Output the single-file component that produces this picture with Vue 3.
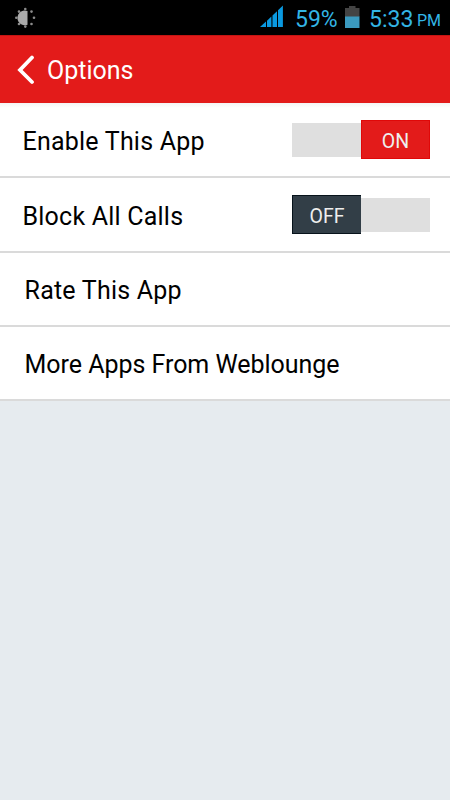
<script setup>
import { ref } from 'vue'

const options = ref([
  { label: 'Enable This App', toggle: true, enabled: true },
  { label: 'Block All Calls', toggle: true, enabled: false },
  { label: 'Rate This App' },
  { label: 'More Apps From Weblounge' }
])

function handleClick(option) {
  if (!option.toggle) return
  option.enabled = !option.enabled
}
</script>

<template>
  <div class="screen">
    <div class="status-bar">
      <svg class="brightness" width="22" height="22" viewBox="0 0 22 22">
        <path d="M13.5 4A7.4 7.4 0 1 0 13.5 17.8Z" fill="#aaa" />
        <g fill="#8c8c8c">
          <circle cx="11.3" cy="2" r="1.3" />
          <circle cx="11.3" cy="19.6" r="1.3" />
          <circle cx="2.3" cy="10.8" r="1.3" />
          <circle cx="20" cy="10.8" r="1.3" />
          <circle cx="5" cy="4.6" r="1.3" />
          <circle cx="5" cy="17" r="1.3" />
          <circle cx="17.5" cy="4.6" r="1.3" />
          <circle cx="17.5" cy="17" r="1.3" />
        </g>
      </svg>
      <div class="status-right">
        <svg class="signal" width="24" height="23" viewBox="0 0 24 23" fill="#0a99e0">
          <path d="M0 22L6 16.6V22Z" />
          <path d="M7 15.8L11.4 11.6V22H7Z" />
          <path d="M12.5 10.6L17 6.3V22H12.5Z" />
          <path d="M18 5.2L22.9 0.4V22H18Z" />
        </svg>
        <span class="percent">59%</span>
        <svg class="battery" width="15" height="22" viewBox="0 0 15 22">
          <path d="M0 2H4V0H10.5V2H14.5V11H0Z" fill="#444" />
          <rect y="10.5" width="14.5" height="11.5" fill="#3b9abf" />
        </svg>
        <span class="time">5:33</span>
        <span class="period">PM</span>
      </div>
    </div>

    <div class="header">
      <svg class="back" width="18" height="30" viewBox="0 0 18 30">
        <path d="M15 2.5L3 15L15 27" fill="none" stroke="#fff" stroke-width="3.8" stroke-linecap="round" />
      </svg>
      <span class="title">Options</span>
    </div>

    <div
      v-for="option in options"
      :key="option.label"
      class="row"
      :class="{ link: !option.toggle }"
      @click="handleClick(option)"
    >
      <span class="label">{{ option.label }}</span>
      <div v-if="option.toggle" class="switch" :class="{ on: option.enabled }">
        <div class="track"></div>
        <div class="thumb">{{ option.enabled ? 'ON' : 'OFF' }}</div>
      </div>
    </div>
  </div>
</template>

<style>
body {
  margin: 0;
  background: #e6ebef;
}
</style>

<style scoped>
.screen {
  width: 450px;
  height: 800px;
  overflow: hidden;
  background: #e6ebef;
  font-family: Roboto, "Liberation Sans", sans-serif;
}

.status-bar {
  display: flex;
  justify-content: space-between;
  box-sizing: border-box;
  height: 35px;
  padding-left: 14px;
  background: #000;
  color: #33b5e5;
}

.brightness {
  margin-top: 7px;
}

.status-right {
  display: flex;
  width: 190px;
  line-height: 39px;
  white-space: nowrap;
}

.signal {
  margin-top: 5px;
  flex: none;
}

.percent {
  width: 50px;
  margin-left: 11px;
  font-size: 23px;
}

.battery {
  margin-top: 6px;
  flex: none;
}

.time {
  width: 48px;
  margin-left: 9px;
  font-size: 23px;
}

.period {
  font-size: 16px;
  line-height: 42px;
}

.header {
  display: flex;
  align-items: center;
  box-sizing: border-box;
  height: 68px;
  padding-left: 17px;
  background: #e31b1a;
  border-top: 1px solid #c41412;
  color: #fff;
}

.title {
  padding-top: 2px;
  margin-left: 12px;
  font-size: 25px;
}

.row {
  display: flex;
  align-items: center;
  justify-content: space-between;
  box-sizing: border-box;
  height: 74px;
  padding: 0 20px 0 22.5px;
  background: #fff;
  border-bottom: 2px solid #dadada;
  color: #000;
}

.row:nth-child(3) {
  height: 75px;
  background: linear-gradient(#f4f4f4, #fff 5px);
}

.row:nth-child(4) {
  height: 75px;
}

.row.link {
  padding-left: 24.5px;
}

.label {
  padding-top: 3px;
  font-size: 25px;
  letter-spacing: 0.22px;
}

.row:last-child .label {
  letter-spacing: -0.03px;
}

.link .label {
  padding-top: 2px;
}

.switch {
  display: flex;
  flex-direction: row-reverse;
  align-items: center;
  width: 138px;
}

.switch.on {
  flex-direction: row;
}

.track {
  width: 69px;
  height: 34px;
  background: #dfdfdf;
}

.thumb {
  box-sizing: border-box;
  width: 69px;
  height: 39px;
  border: 1px solid #07131b;
  border-right: none;
  background: #323e47;
  color: #eee;
  font-size: 19.5px;
  line-height: 41px;
  text-align: center;
}

.on .thumb {
  border: 1px solid #e00808;
  background: #e31b1a;
}
</style>
